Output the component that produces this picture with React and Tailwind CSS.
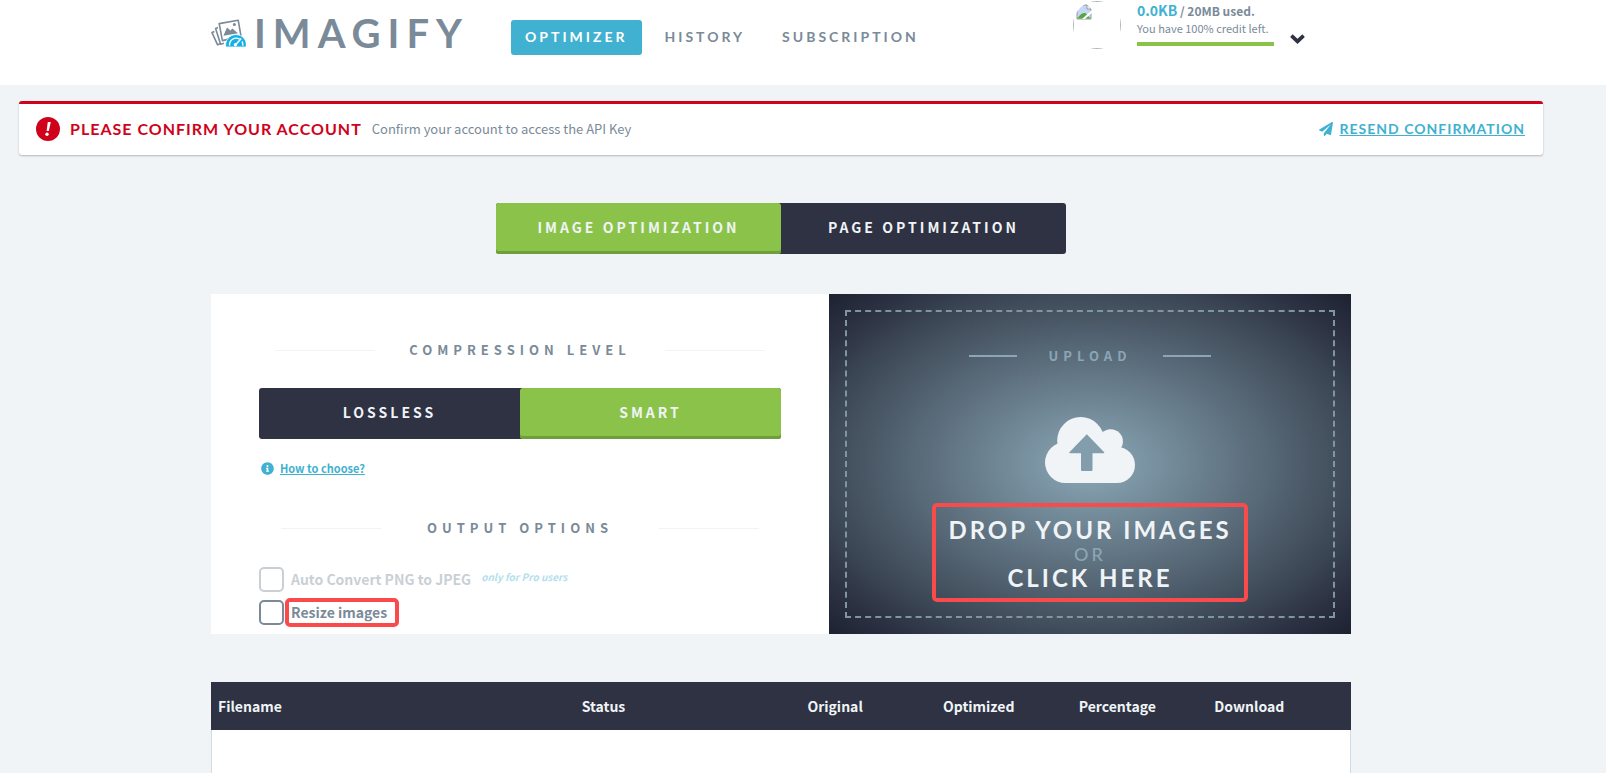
import React from "react";
import { FaPaperPlane, FaInfoCircle } from "react-icons/fa";

const BRAND = "font-['Lato','Liberation_Sans',sans-serif]";

const COLUMNS = [
  { label: "Filename", width: "w-[31.9%]" },
  { label: "Status", width: "w-[19.8%]" },
  { label: "Original", width: "w-[11.9%]" },
  { label: "Optimized", width: "w-[11.9%]" },
  { label: "Percentage", width: "w-[11.9%]" },
  { label: "Download", width: "w-auto" },
];

const LogoMark = () => (
  <svg width="35" height="28" viewBox="0 0 35 28" fill="none" aria-hidden="true">
    <g stroke="#7a8a99" strokeWidth="1.6" strokeLinejoin="round">
      <path d="M3.4 12.6 1 13.6 6.6 25.8 9 24.8" />
      <path d="M7 8.6 4.6 9.4 9.6 25.2 13 24.2" />
      <path d="M8.2 4.6 27.2 1.2 30 17.4 11.4 21.6Z" fill="#fff" />
    </g>
    <path d="M12.4 16.8 16 8.4 19.4 11.6 21.4 9.4 27 14.2Z" fill="#7a8a99" />
    <circle cx="23.4" cy="5.6" r="1.5" fill="#7a8a99" />
    <path d="M14.8 28a10.4 10.4 0 1 1 20.4 0Z" fill="#16b0e6" stroke="#fff" strokeWidth="0.8" />
    <path d="M18.6 26.6a6.6 6.6 0 0 1 10-6.4M31 22.4a6.6 6.6 0 0 1 .8 4.2" stroke="#fff" strokeWidth="1.4" />
    <path d="M24 26.4 30.2 19.6" stroke="#fff" strokeWidth="1.5" />
    <circle cx="24.4" cy="25.8" r="1.7" fill="#fff" />
  </svg>
);

const CloudUpload = () => (
  <svg width="90" height="66" viewBox="0 0 90 66" className="mt-[51px]" aria-hidden="true">
    <g fill="#f0f4f7">
      <circle cx="35.7" cy="23.5" r="23.5" />
      <circle cx="65.7" cy="24.5" r="12.2" />
      <circle cx="20.5" cy="45.5" r="20.5" />
      <circle cx="72" cy="48" r="18" />
      <path d="M20 25H76V36L72 66H20Z" />
    </g>
    <path d="M41.8 17.3 59.2 35.2Q59.6 36.2 58.8 36.2H47.5V53Q47.5 54 46.5 54H37Q36 54 36 53V36.2H24.8Q24 36.2 24.4 35.2Z" fill="#829eac" />
  </svg>
);

const BrokenImage = () => (
  <svg width="16" height="16" viewBox="0 0 16 16" className="m-[2px]" aria-hidden="true">
    <path d="M1 1H11L15 5V15H1Z" fill="#c6d6f5" stroke="#9a9a9a" />
    <path d="M1.5 14.5C4 10 7 8.6 9.5 9L14.5 14.5Z" fill="#55a83a" />
    <path d="M11 1V5H15" fill="#fff" stroke="#9a9a9a" />
    <path d="M6 15 16 6V9L9 15Z" fill="#fff" />
  </svg>
);

const Header = () => (
  <header className="h-[85px] bg-white pr-11">
    <div className="mx-auto flex max-w-[1140px] items-start">
      <a href="#home" className="mt-[13px] flex h-10 items-center" aria-label="Imagify">
        <LogoMark />
        <span className={`${BRAND} ml-2 text-[40px] leading-10 font-bold tracking-[7px] text-[#7a8a99]`}>IMAGIFY</span>
      </a>
      <nav className={`${BRAND} mt-5 ml-[42px] flex gap-[9px] text-sm leading-[33px] font-bold tracking-[3px] text-[#7a8a99]`}>
        <a href="#optimizer" className="rounded-[3px] bg-[#40b1d0] px-[14px] pb-[2px] text-white">OPTIMIZER</a>
        <a href="#history" className="px-[14px]">HISTORY</a>
        <a href="#subscription" className="px-[14px]">SUBSCRIPTION</a>
      </nav>
      <div className="mr-[46px] ml-auto flex">
        <div className="mt-px size-12 overflow-hidden rounded-full">
          <div className="size-12 border border-[#b4b4b4]">
            <BrokenImage />
          </div>
        </div>
        <div className="ml-4 w-[137px] text-[#7a8a99]">
          <p className="text-xs leading-5 font-bold">
            <span className="text-sm leading-5 text-[#40b1d0]">0.0KB</span> / 20MB used.
          </p>
          <p className="text-[11px] leading-[15px]">You have 100% credit left.</p>
          <div className="mt-[6px] h-1 bg-[#8bc34a]" />
        </div>
        <button type="button" aria-label="Account menu" className="mt-[34px] ml-4 h-[10px]">
          <svg width="15" height="10" viewBox="0 0 15 10" fill="none" aria-hidden="true">
            <path d="M1.4 1.6 7.5 7.4 13.6 1.6" stroke="#2e3242" strokeWidth="3.6" />
          </svg>
        </button>
      </div>
    </div>
  </header>
);

const Notice = () => (
  <section className="mx-[19px] mt-4 flex h-[54px] items-center rounded-[3px] border-t-[3px] border-[#d0021b] bg-white pr-[18px] pb-px pl-[17px] shadow-[0_1px_2px_rgba(0,0,0,0.25)]">
    <svg width="24" height="24" viewBox="0 0 24 24" aria-hidden="true">
      <circle cx="12" cy="12" r="12" fill="#d0021b" />
      <path d="M11.8 5H14.8L12.8 14H10.6Z" fill="#fff" />
      <circle cx="11" cy="17.2" r="1.7" fill="#fff" />
    </svg>
    <strong className={`${BRAND} ml-[10px] text-base leading-6 tracking-[1px] text-[#d0021b]`}>PLEASE CONFIRM YOUR ACCOUNT</strong>
    <p className="ml-[10px] text-[13px] leading-6 text-[#7a8a99]">Confirm your account to access the API Key</p>
    <a href="#resend" className={`${BRAND} ml-auto flex items-center gap-[7px] text-sm leading-6 font-bold tracking-[1px] text-[#40b1d0]`}>
      <FaPaperPlane size={14} />
      <span className="underline">RESEND CONFIRMATION</span>
    </a>
  </section>
);

const Toggle = ({ options, active, className }) => (
  <div className={`flex rounded-[3px] bg-[#2e3242] ${className}`}>
    {options.map((label) => (
      <button
        key={label}
        type="button"
        aria-pressed={label === active}
        className={`h-[51px] flex-1 rounded-[3px] pb-[3px] text-sm font-bold tracking-[3px] text-[#f0f4f7] ${
          label === active ? "bg-[#8bc34a] shadow-[inset_0_-3px_0_#6f9f3b]" : ""
        }`}
      >
        {label}
      </button>
    ))}
  </div>
);

const Heading = ({ children, className }) => (
  <h2 className={`flex items-center justify-center text-[13px] leading-5 font-bold tracking-[5px] text-[#7a8a99] ${className}`}>
    <span className="h-px w-[100px] bg-[#f0f4f7]" />
    {children}
    <span className="h-px w-[100px] bg-[#f0f4f7]" />
  </h2>
);

const Settings = () => (
  <section className="bg-white px-12 pt-[46px] pb-[7px]">
    <Heading className="gap-[34px]">COMPRESSION LEVEL</Heading>
    <Toggle options={["LOSSLESS", "SMART"]} active="SMART" className="mt-7" />
    <a href="#how" className="mt-5 ml-[2px] flex items-center gap-[6px] text-[11px] leading-[18px] font-bold text-[#40b1d0]">
      <FaInfoCircle size={13} />
      <span className="underline">How to choose?</span>
    </a>
    <Heading className="mt-[41px] gap-[46px]">OUTPUT OPTIONS</Heading>
    <div className="mt-7 flex h-[26px] items-center text-sm font-bold text-[#7a8a99] opacity-40">
      <input id="convert" type="checkbox" disabled className="size-[25px] appearance-none rounded-[5px] border-2 border-[#7a8a99]" />
      <label htmlFor="convert" className="ml-[7px]">Auto Convert PNG to JPEG</label>
      <em className="mb-1 ml-[10px] text-[10px] text-[#40b1d0]">only for Pro users</em>
    </div>
    <div className="mt-[6px] flex items-center text-sm font-bold text-[#7a8a99]">
      <input id="resize" type="checkbox" className="size-[25px] appearance-none rounded-[5px] border-2 border-[#7a8a99]" />
      <label htmlFor="resize" className="ml-px rounded-[5px] border-4 border-[#f94b4b] pr-2 pl-[2px] leading-[21px]">Resize images</label>
    </div>
  </section>
);

const Upload = () => (
  <section className="bg-[radial-gradient(ellipse_at_center,#8ba8b7_0%,#3d4856_72%,#2c3242_86%,#1d2231_100%)] p-4">
    <button type="button" className="flex h-full w-full flex-col items-center justify-start border-2 border-dashed border-[#8094a1] pt-[34px]">
      <span className="flex items-center gap-8 text-[13px] leading-5 font-bold tracking-[5px] text-[#8ba6b5]">
        <span className="h-[2px] w-12 bg-[#8ba6b5]" />
        UPLOAD
        <span className="h-[2px] w-12 bg-[#8ba6b5]" />
      </span>
      <CloudUpload />
      <span className={`${BRAND} mt-5 flex flex-col rounded-[5px] border-4 border-[#f94b4b] px-3 pt-[11px] pb-2 text-2xl leading-6 font-bold tracking-[3px] text-[#f0f4f7]`}>
        <span>DROP YOUR IMAGES</span>
        <span className="text-lg leading-6 font-medium text-[#8ba6b5]">OR</span>
        <span>CLICK HERE</span>
      </span>
    </button>
  </section>
);

const FilesTable = () => (
  <table className="mt-12 w-full table-fixed border-separate border-spacing-0">
    <thead>
      <tr className="h-12 bg-[#2e3242] text-left text-sm text-[#f0f4f7]">
        {COLUMNS.map((col) => (
          <th key={col.label} scope="col" className={`${col.width} px-[7px] font-bold`}>{col.label}</th>
        ))}
      </tr>
    </thead>
    <tbody>
      <tr className="h-24 bg-white">
        <td colSpan={6} className="border-x border-[#d2dbe1]" />
      </tr>
    </tbody>
  </table>
);

export default function App() {
  return (
    <div className="h-screen overflow-hidden bg-[#f0f4f7] font-['Noto_Sans_CJK_SC','Open_Sans',sans-serif]">
      <Header />
      <main className="pr-11">
        <Notice />
        <div className="mx-auto mt-12 max-w-[1140px]">
          <Toggle options={["IMAGE OPTIMIZATION", "PAGE OPTIMIZATION"]} active="IMAGE OPTIMIZATION" className="mx-auto w-1/2" />
          <div className="mt-10 grid grid-cols-[618fr_522fr]">
            <Settings />
            <Upload />
          </div>
          <FilesTable />
        </div>
      </main>
    </div>
  );
}
